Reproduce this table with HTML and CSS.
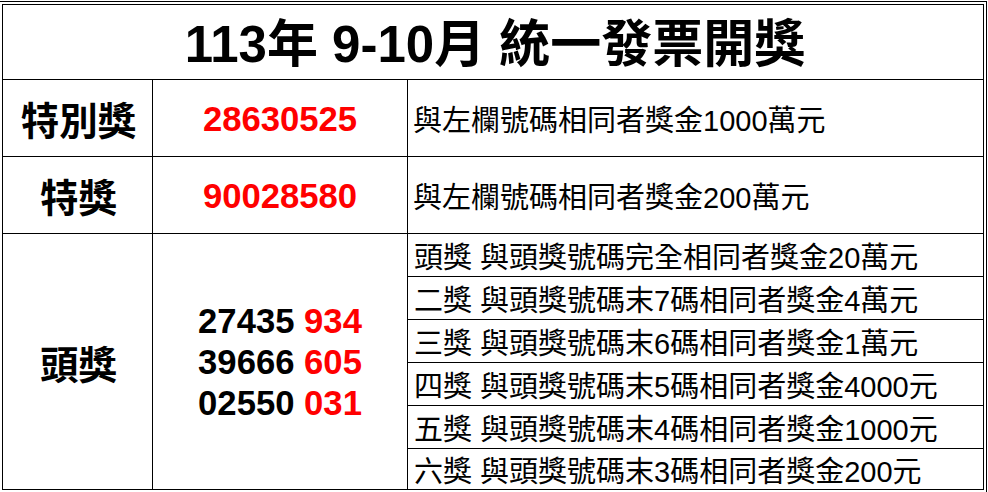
FILE: index.html
```html
<!DOCTYPE html>
<html lang="zh-Hant">
<head>
<meta charset="utf-8">
<title>113年 9-10月 統一發票開獎</title>
<link rel="stylesheet" href="styles.css">
</head>
<body>
<div class="frame">
  <div class="board">
    <div class="cell title">113年 9-10月 統一發票開獎</div>

    <div class="cell head">特別獎</div>
    <div class="cell num red">28630525</div>
    <div class="cell desc">與左欄號碼相同者獎金1000萬元</div>

    <div class="cell head">特獎</div>
    <div class="cell num red">90028580</div>
    <div class="cell desc">與左欄號碼相同者獎金200萬元</div>

    <div class="cell head span6">頭獎</div>
    <div class="cell num span6 multi">
      <div>27435 <span class="red">934</span></div>
      <div>39666 <span class="red">605</span></div>
      <div>02550 <span class="red">031</span></div>
    </div>
    <div class="cell sub">頭獎 與頭獎號碼完全相同者獎金20萬元</div>
    <div class="cell sub">二獎 與頭獎號碼末7碼相同者獎金4萬元</div>
    <div class="cell sub">三獎 與頭獎號碼末6碼相同者獎金1萬元</div>
    <div class="cell sub">四獎 與頭獎號碼末5碼相同者獎金4000元</div>
    <div class="cell sub">五獎 與頭獎號碼末4碼相同者獎金1000元</div>
    <div class="cell sub">六獎 與頭獎號碼末3碼相同者獎金200元</div>
  </div>
</div>
</body>
</html>
```

FILE: styles.css
```css
html, body {
  margin: 0;
  padding: 0;
  background: #fff;
}

body {
  font-family: "Liberation Sans", "Noto Sans CJK TC", sans-serif;
  color: #000;
  overflow: hidden;
}

.frame {
  margin-top: 1px;
  width: 986px;
  border-top: 1px solid #000;
  border-right: 1px solid #000;
  padding-top: 2px;
  padding-bottom: 6px;
}

.board {
  margin-left: 2px;
  width: 980px;
  background: #000;
  padding: 1px;
  display: grid;
  gap: 1px;
  grid-template-columns: 149px 254px 575px;
  grid-template-rows: 74px 76px 76px 42px 42px 42px 42px 42px 40px;
}

.cell {
  background: #fff;
  display: flex;
  align-items: center;
  white-space: nowrap;
}

.title {
  grid-column: 1 / 4;
  justify-content: center;
  font-size: 51px;
  font-weight: bold;
  padding-bottom: 4px;
  padding-left: 4px;
}

.head {
  justify-content: center;
  font-size: 38.5px;
  font-weight: bold;
  padding-left: 2px;
}

.num {
  justify-content: center;
  font-size: 34.67px;
  font-weight: bold;
  padding-top: 2px;
}

.red {
  color: #ff0000;
}

.desc {
  font-size: 29px;
  padding-left: 5px;
}

.sub {
  font-size: 29px;
  padding-left: 6px;
}

.span6 {
  grid-row: span 6;
}

.multi {
  flex-direction: column;
  line-height: 41px;
  padding-top: 1px;
}
```
